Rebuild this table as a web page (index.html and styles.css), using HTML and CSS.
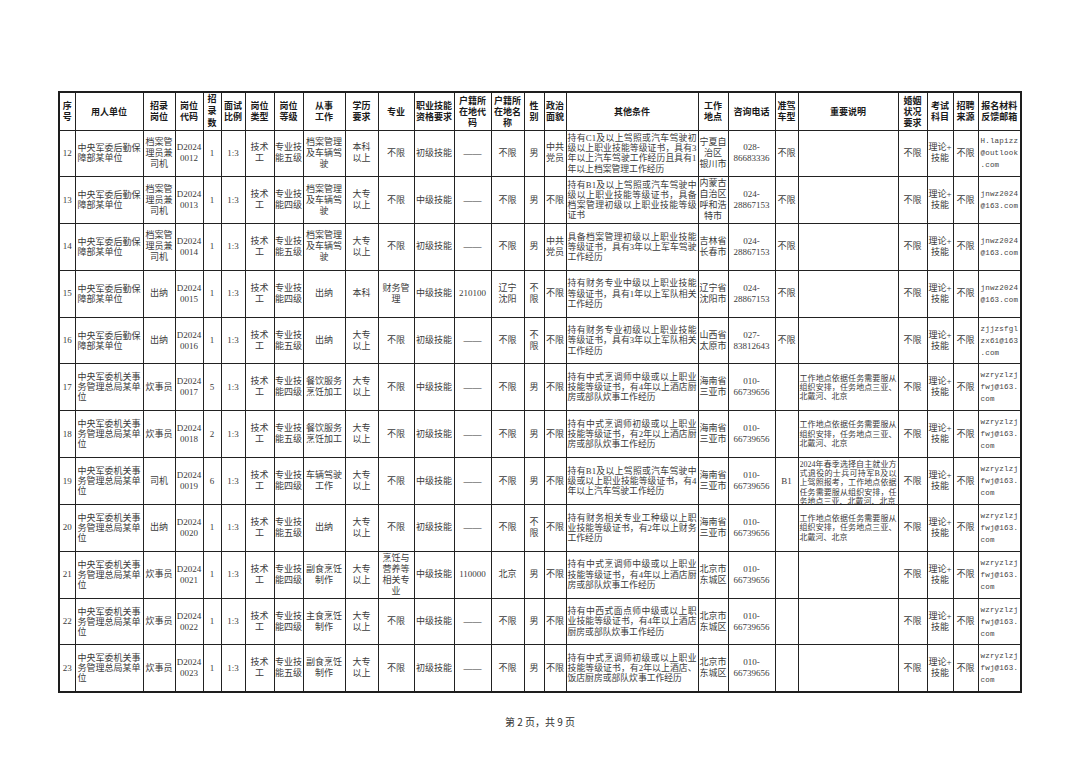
FILE: index.html
```html
<!DOCTYPE html>
<html lang="zh-CN">
<head>
<meta charset="utf-8">
<title>岗位表 第2页</title>
<link rel="stylesheet" href="styles.css">
</head>
<body>
<div class="page">
<table class="grid">
<colgroup>
<col style="width:16px"><col style="width:68px"><col style="width:32px"><col style="width:28px"><col style="width:18px"><col style="width:24px"><col style="width:29px"><col style="width:29px"><col style="width:42px"><col style="width:33px"><col style="width:36px"><col style="width:40px"><col style="width:37px"><col style="width:33px"><col style="width:20px"><col style="width:22px"><col style="width:132px"><col style="width:30px"><col style="width:47px"><col style="width:23px"><col style="width:100px"><col style="width:29px"><col style="width:26px"><col style="width:25px"><col style="width:43px">
</colgroup>
<thead>
<tr>
<th>序<br>号</th>
<th>用人单位</th>
<th>招录<br>岗位</th>
<th>岗位<br>代码</th>
<th class="vt"><div class="clip">招<br>录<br>数<br>量</div></th>
<th>面试<br>比例</th>
<th>岗位<br>类型</th>
<th>岗位<br>等级</th>
<th>从事<br>工作</th>
<th>学历<br>要求</th>
<th>专业</th>
<th>职业技能<br>资格要求</th>
<th>户籍所<br>在地代<br>码</th>
<th>户籍所<br>在地名<br>称</th>
<th>性<br>别</th>
<th>政治<br>面貌</th>
<th>其他条件</th>
<th>工作<br>地点</th>
<th>咨询电话</th>
<th>准驾<br>车型</th>
<th>重要说明</th>
<th>婚姻<br>状况<br>要求</th>
<th>考试<br>科目</th>
<th>招聘<br>来源</th>
<th>报名材料<br>反馈邮箱</th>
</tr>
</thead>
<tbody>
<tr>
<td>12</td>
<td class="u"><span>中央军委后勤保</span><span>障部某单位</span></td>
<td>档案管<br>理员兼<br>司机</td>
<td>D2024<br>0012</td>
<td>1</td>
<td>1:3</td>
<td>技术<br>工</td>
<td>专业技<br>能五级</td>
<td>档案管理<br>及车辆驾<br>驶</td>
<td>本科<br>以上</td>
<td>不限</td>
<td>初级技能</td>
<td>——</td>
<td>不限</td>
<td>男</td>
<td>中共<br>党员</td>
<td class="oc"><span>持有C1及以上驾照或汽车驾驶初</span><span>级以上职业技能等级证书，具有3</span><span>年以上汽车驾驶工作经历且具有1</span><span>年以上档案管理工作经历</span></td>
<td>宁夏自<br>治区<br>银川市</td>
<td>028-<br>86683336</td>
<td>不限</td>
<td class="nt"></td>
<td>不限</td>
<td>理论+<br>技能</td>
<td>不限</td>
<td class="em">H.lapizz<br>@outlook<br>.com</td>
</tr>
<tr>
<td>13</td>
<td class="u"><span>中央军委后勤保</span><span>障部某单位</span></td>
<td>档案管<br>理员兼<br>司机</td>
<td>D2024<br>0013</td>
<td>1</td>
<td>1:3</td>
<td>技术<br>工</td>
<td>专业技<br>能四级</td>
<td>档案管理<br>及车辆驾<br>驶</td>
<td>大专<br>以上</td>
<td>不限</td>
<td>中级技能</td>
<td>——</td>
<td>不限</td>
<td>男</td>
<td>不限</td>
<td class="oc"><span>持有B1及以上驾照或汽车驾驶中</span><span>级以上职业技能等级证书，具备</span><span>档案管理初级以上职业技能等级</span><span>证书</span></td>
<td>内蒙古<br>自治区<br>呼和浩<br>特市</td>
<td>024-<br>28867153</td>
<td>不限</td>
<td class="nt"></td>
<td>不限</td>
<td>理论+<br>技能</td>
<td>不限</td>
<td class="em">jnwz2024<br>@163.com</td>
</tr>
<tr>
<td>14</td>
<td class="u"><span>中央军委后勤保</span><span>障部某单位</span></td>
<td>档案管<br>理员兼<br>司机</td>
<td>D2024<br>0014</td>
<td>1</td>
<td>1:3</td>
<td>技术<br>工</td>
<td>专业技<br>能五级</td>
<td>档案管理<br>及车辆驾<br>驶</td>
<td>大专<br>以上</td>
<td>不限</td>
<td>初级技能</td>
<td>——</td>
<td>不限</td>
<td>男</td>
<td>中共<br>党员</td>
<td class="oc"><span>具备档案管理初级以上职业技能</span><span>等级证书，具有3年以上军车驾驶</span><span>工作经历</span></td>
<td>吉林省<br>长春市</td>
<td>024-<br>28867153</td>
<td>不限</td>
<td class="nt"></td>
<td>不限</td>
<td>理论+<br>技能</td>
<td>不限</td>
<td class="em">jnwz2024<br>@163.com</td>
</tr>
<tr>
<td>15</td>
<td class="u"><span>中央军委后勤保</span><span>障部某单位</span></td>
<td>出纳</td>
<td>D2024<br>0015</td>
<td>1</td>
<td>1:3</td>
<td>技术<br>工</td>
<td>专业技<br>能四级</td>
<td>出纳</td>
<td>本科</td>
<td>财务管<br>理</td>
<td>中级技能</td>
<td>210100</td>
<td>辽宁<br>沈阳</td>
<td>不<br>限</td>
<td>不限</td>
<td class="oc"><span>持有财务专业中级以上职业技能</span><span>等级证书，具有1年以上军队相关</span><span>工作经历</span></td>
<td>辽宁省<br>沈阳市</td>
<td>024-<br>28867153</td>
<td>不限</td>
<td class="nt"></td>
<td>不限</td>
<td>理论+<br>技能</td>
<td>不限</td>
<td class="em">jnwz2024<br>@163.com</td>
</tr>
<tr>
<td>16</td>
<td class="u"><span>中央军委后勤保</span><span>障部某单位</span></td>
<td>出纳</td>
<td>D2024<br>0016</td>
<td>1</td>
<td>1:3</td>
<td>技术<br>工</td>
<td>专业技<br>能五级</td>
<td>出纳</td>
<td>大专<br>以上</td>
<td>不限</td>
<td>初级技能</td>
<td>——</td>
<td>不限</td>
<td>不<br>限</td>
<td>不限</td>
<td class="oc"><span>持有财务专业初级以上职业技能</span><span>等级证书，具有3年以上军队相关</span><span>工作经历</span></td>
<td>山西省<br>太原市</td>
<td>027-<br>83812643</td>
<td>不限</td>
<td class="nt"></td>
<td>不限</td>
<td>理论+<br>技能</td>
<td>不限</td>
<td class="em">zjjzsfgl<br>zx61@163<br>.com</td>
</tr>
<tr>
<td>17</td>
<td class="u"><span>中央军委机关事</span><span>务管理总局某单</span><span>位</span></td>
<td>炊事员</td>
<td>D2024<br>0017</td>
<td>5</td>
<td>1:3</td>
<td>技术<br>工</td>
<td>专业技<br>能四级</td>
<td>餐饮服务<br>烹饪加工</td>
<td>大专<br>以上</td>
<td>不限</td>
<td>中级技能</td>
<td>——</td>
<td>不限</td>
<td>男</td>
<td>不限</td>
<td class="oc"><span>持有中式烹调师中级或以上职业</span><span>技能等级证书，有4年以上酒店厨</span><span>房或部队炊事工作经历</span></td>
<td>海南省<br>三亚市</td>
<td>010-<br>66739656</td>
<td></td>
<td class="nt"><span>工作地点依据任务需要服从</span><span>组织安排，任务地点三亚、</span><span>北戴河、北京</span></td>
<td>不限</td>
<td>理论+<br>技能</td>
<td>不限</td>
<td class="em">wzryzlzj<br>fwj@163.<br>com</td>
</tr>
<tr>
<td>18</td>
<td class="u"><span>中央军委机关事</span><span>务管理总局某单</span><span>位</span></td>
<td>炊事员</td>
<td>D2024<br>0018</td>
<td>2</td>
<td>1:3</td>
<td>技术<br>工</td>
<td>专业技<br>能五级</td>
<td>餐饮服务<br>烹饪加工</td>
<td>大专<br>以上</td>
<td>不限</td>
<td>初级技能</td>
<td>——</td>
<td>不限</td>
<td>男</td>
<td>不限</td>
<td class="oc"><span>持有中式烹调师初级或以上职业</span><span>技能等级证书，有2年以上酒店厨</span><span>房或部队炊事工作经历</span></td>
<td>海南省<br>三亚市</td>
<td>010-<br>66739656</td>
<td></td>
<td class="nt"><span>工作地点依据任务需要服从</span><span>组织安排，任务地点三亚、</span><span>北戴河、北京</span></td>
<td>不限</td>
<td>理论+<br>技能</td>
<td>不限</td>
<td class="em">wzryzlzj<br>fwj@163.<br>com</td>
</tr>
<tr>
<td>19</td>
<td class="u"><span>中央军委机关事</span><span>务管理总局某单</span><span>位</span></td>
<td>司机</td>
<td>D2024<br>0019</td>
<td>6</td>
<td>1:3</td>
<td>技术<br>工</td>
<td>专业技<br>能四级</td>
<td>车辆驾驶<br>工作</td>
<td>大专<br>以上</td>
<td>不限</td>
<td>中级技能</td>
<td>——</td>
<td>不限</td>
<td>男</td>
<td>不限</td>
<td class="oc"><span>持有B1及以上驾照或汽车驾驶中</span><span>级或以上职业技能等级证书，有4</span><span>年以上汽车驾驶工作经历</span></td>
<td>海南省<br>三亚市</td>
<td>010-<br>66739656</td>
<td>B1</td>
<td class="nt top"><div class="cut"><span>2024年春季选择自主就业方</span><span>式退役的士兵可持军B及以</span><span>上驾照报考，工作地点依据</span><span>任务需要服从组织安排，任</span><span>务地点三亚、北戴河、北京</span></div></td>
<td>不限</td>
<td>理论+<br>技能</td>
<td>不限</td>
<td class="em">wzryzlzj<br>fwj@163.<br>com</td>
</tr>
<tr>
<td>20</td>
<td class="u"><span>中央军委机关事</span><span>务管理总局某单</span><span>位</span></td>
<td>出纳</td>
<td>D2024<br>0020</td>
<td>1</td>
<td>1:3</td>
<td>技术<br>工</td>
<td>专业技<br>能五级</td>
<td>出纳</td>
<td>大专<br>以上</td>
<td>不限</td>
<td>初级技能</td>
<td>——</td>
<td>不限</td>
<td>不<br>限</td>
<td>不限</td>
<td class="oc"><span>持有财务相关专业工种级以上职</span><span>业技能等级证书，有2年以上财务</span><span>工作经历</span></td>
<td>海南省<br>三亚市</td>
<td>010-<br>66739656</td>
<td></td>
<td class="nt"><span>工作地点依据任务需要服从</span><span>组织安排，任务地点三亚、</span><span>北戴河、北京</span></td>
<td>不限</td>
<td>理论+<br>技能</td>
<td>不限</td>
<td class="em">wzryzlzj<br>fwj@163.<br>com</td>
</tr>
<tr>
<td>21</td>
<td class="u"><span>中央军委机关事</span><span>务管理总局某单</span><span>位</span></td>
<td>炊事员</td>
<td>D2024<br>0021</td>
<td>1</td>
<td>1:3</td>
<td>技术<br>工</td>
<td>专业技<br>能四级</td>
<td>副食烹饪<br>制作</td>
<td>大专<br>以上</td>
<td>烹饪与<br>营养等<br>相关专<br>业</td>
<td>中级技能</td>
<td>110000</td>
<td>北京</td>
<td>男</td>
<td>不限</td>
<td class="oc"><span>持有中式烹调师中级或以上职业</span><span>技能等级证书，有4年以上酒店厨</span><span>房或部队炊事工作经历</span></td>
<td>北京市<br>东城区</td>
<td>010-<br>66739656</td>
<td></td>
<td class="nt"></td>
<td>不限</td>
<td>理论+<br>技能</td>
<td>不限</td>
<td class="em">wzryzlzj<br>fwj@163.<br>com</td>
</tr>
<tr>
<td>22</td>
<td class="u"><span>中央军委机关事</span><span>务管理总局某单</span><span>位</span></td>
<td>炊事员</td>
<td>D2024<br>0022</td>
<td>1</td>
<td>1:3</td>
<td>技术<br>工</td>
<td>专业技<br>能四级</td>
<td>主食烹饪<br>制作</td>
<td>大专<br>以上</td>
<td>不限</td>
<td>中级技能</td>
<td>——</td>
<td>不限</td>
<td>男</td>
<td>不限</td>
<td class="oc"><span>持有中西式面点师中级或以上职</span><span>业技能等级证书，有4年以上酒店</span><span>厨房或部队炊事工作经历</span></td>
<td>北京市<br>东城区</td>
<td>010-<br>66739656</td>
<td></td>
<td class="nt"></td>
<td>不限</td>
<td>理论+<br>技能</td>
<td>不限</td>
<td class="em">wzryzlzj<br>fwj@163.<br>com</td>
</tr>
<tr>
<td>23</td>
<td class="u"><span>中央军委机关事</span><span>务管理总局某单</span><span>位</span></td>
<td>炊事员</td>
<td>D2024<br>0023</td>
<td>1</td>
<td>1:3</td>
<td>技术<br>工</td>
<td>专业技<br>能五级</td>
<td>副食烹饪<br>制作</td>
<td>大专<br>以上</td>
<td>不限</td>
<td>初级技能</td>
<td>——</td>
<td>不限</td>
<td>男</td>
<td>不限</td>
<td class="oc"><span>持有中式烹调师初级或以上职业</span><span>技能等级证书，有2年以上酒店、</span><span>饭店厨房或部队炊事工作经历</span></td>
<td>北京市<br>东城区</td>
<td>010-<br>66739656</td>
<td></td>
<td class="nt"></td>
<td>不限</td>
<td>理论+<br>技能</td>
<td>不限</td>
<td class="em">wzryzlzj<br>fwj@163.<br>com</td>
</tr>
</tbody>
</table>
<div class="foot">第 2 页，共 9 页</div>
</div>
</body>
</html>
```

FILE: styles.css
```css
* { box-sizing: border-box; }
html, body { margin: 0; padding: 0; background: #ffffff; }
.page {
  width: 1080px;
  height: 764px;
  padding-top: 91px;
  overflow: hidden;
}
.grid {
  margin-left: 58px;
  width: 962px;
  table-layout: fixed;
  border-collapse: collapse;
  border: 2px solid #1e1e1e;
  font-family: "Liberation Serif", "Noto Sans CJK SC", serif;
  font-size: 9px;
  line-height: 11px;
  color: #3b3b3b;
}
.grid th, .grid td {
  border: 1px solid #222222;
  padding: 0;
  text-align: center;
  vertical-align: middle;
  overflow: hidden;
  white-space: nowrap;
}
.grid thead tr { height: 38px; }
.grid tbody tr { height: 46.8px; }
.grid th {
  font-family: "Noto Sans CJK SC", sans-serif;
  font-weight: 700;
  font-size: 9px;
  line-height: 11px;
  color: #1a1a1a;
}
.grid th.vt { vertical-align: top; }
.clip {
  height: 36px;
  overflow: hidden;
  line-height: 12px;
}
.grid .u, .grid .oc, .grid .nt { text-align: left; white-space: normal; }
.u span, .oc span, .nt span {
  display: block;
  text-align: justify;
  text-align-last: justify;
}
.u span:last-child, .oc span:last-child, .nt span:last-child { text-align-last: left; }
.grid .u { padding: 0 2px; line-height: 10px; }
.grid .oc { font-size: 8.8px; line-height: 10.2px; padding: 0 1px; }
.grid .nt { font-size: 8px; line-height: 9.2px; padding: 0 1px; }
.grid .nt.top { vertical-align: top; }
.cut { height: 46px; overflow: hidden; padding-top: 2px; }
.grid .em {
  text-align: left;
  font-family: "Liberation Mono", monospace;
  font-size: 7.5px;
  letter-spacing: 0.2px;
  line-height: 12px;
  padding: 0 1px 0 2px;
  color: #444444;
}
.foot {
  margin-top: 22px;
  text-align: center;
  font-family: "Noto Sans CJK SC", sans-serif;
  font-size: 10px;
  line-height: 14px;
  color: #333333;
}
```
